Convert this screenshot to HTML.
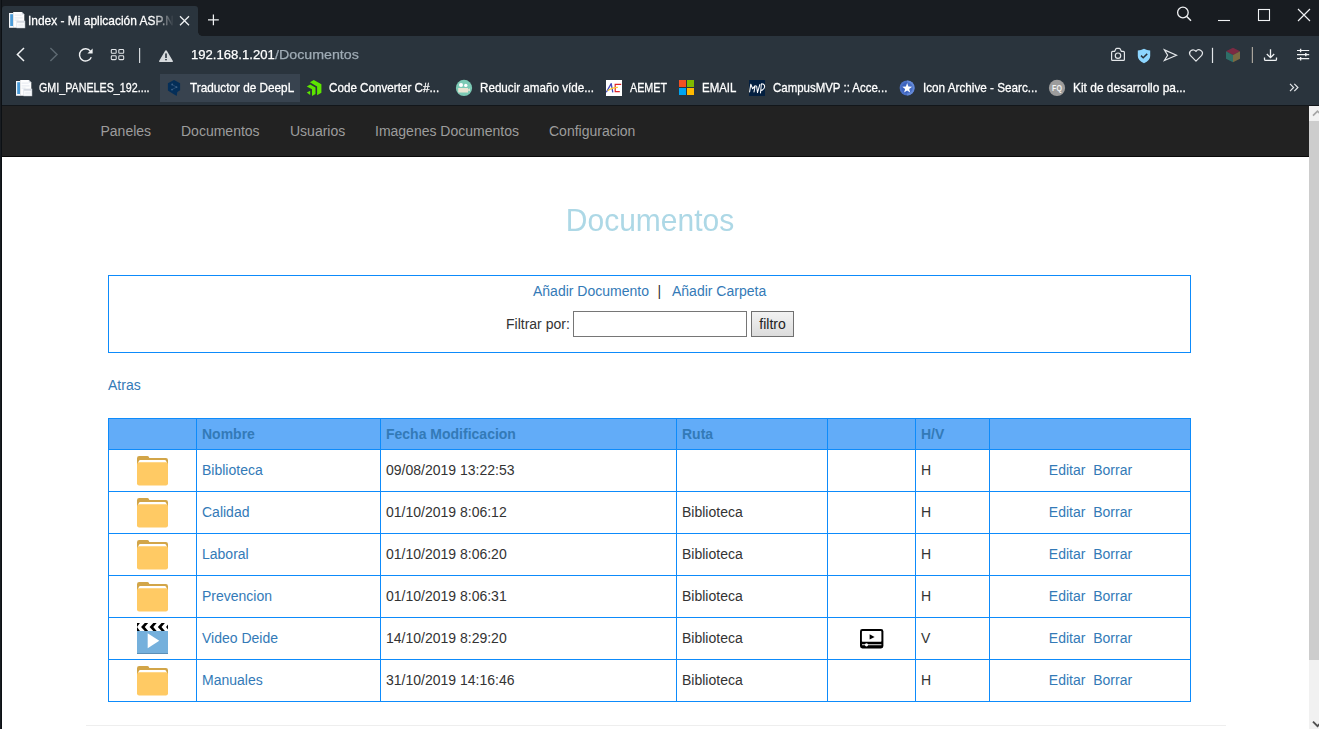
<!DOCTYPE html>
<html lang="es">
<head>
<meta charset="utf-8">
<title>Index - Mi aplicación ASP.NET</title>
<style>
*{box-sizing:border-box;margin:0;padding:0}
html,body{width:1319px;height:729px;overflow:hidden;background:#fff}
body{position:relative;font-family:"Liberation Sans",sans-serif;font-size:14px;line-height:20px;color:#333}
.abs{position:absolute}
svg{position:absolute;overflow:hidden}
/* ---------- browser chrome ---------- */
#titlebar{position:absolute;left:0;top:0;width:1319px;height:36px;background:#181c21}
#tab{position:absolute;left:2px;top:6px;width:196px;height:30px;background:#2a343d;border-radius:3px 3px 0 0}
#tabcurve{position:absolute;left:198px;top:32px;width:4px;height:4px;background:radial-gradient(circle at 100% 0,#181c21 3.5px,#2a343d 4px)}
#tabtitle{-webkit-text-stroke:0.3px #fff;position:absolute;left:27.7px;top:11px;width:146px;height:20px;line-height:20px;font-size:13.2px;color:#fff;white-space:nowrap;overflow:hidden;
  -webkit-mask-image:linear-gradient(90deg,#000 125px,transparent 146px);mask-image:linear-gradient(90deg,#000 125px,transparent 146px)}
#toolbar{position:absolute;left:0;top:36px;width:1319px;height:69px;background:#2a343d}
#chromeline{position:absolute;left:0;top:105px;width:1319px;height:1px;background:#12161a}
#leftedge{position:absolute;left:0;top:0;width:2px;height:729px;background:linear-gradient(90deg,#181c21 1px,#0c1014 1px)}
.url{-webkit-text-stroke:0.25px currentColor;position:absolute;left:190.7px;top:45px;height:20px;line-height:20px;font-size:13.7px;color:#fff;white-space:nowrap}

.bm{-webkit-text-stroke:0.3px #fff;position:absolute;top:78px;height:20px;line-height:20px;font-size:13.2px;transform-origin:0 50%;color:#fff;white-space:nowrap}
#bmhl{position:absolute;left:160px;top:74px;width:140px;height:28px;background:#38434f}
/* ---------- page ---------- */
#navbar{position:absolute;left:2px;top:106px;width:1307px;height:51px;background:#222;border-bottom:1px solid #080808}
.nl{position:absolute;top:121px;height:20px;line-height:20px;font-size:14px;color:#9d9d9d;white-space:nowrap}
#sbar{position:absolute;left:1309px;top:106px;width:10px;height:623px;background:#f1f1f1}
#sthumb{position:absolute;left:1309px;top:121px;width:10px;height:539px;background:#cdcdcd}
h2{transform:scaleY(1.06);transform-origin:50% 50%;position:absolute;left:2px;top:203px;width:1296px;text-align:center;font-size:30px;line-height:33px;font-weight:normal;color:#add8e6}
#box{position:absolute;left:108px;top:275px;width:1083px;height:78px;border:1px solid #0d8bfb}
a,.lnk{color:#337ab7;text-decoration:none}
.t{position:absolute;white-space:nowrap;height:20px;line-height:20px}
#finput{position:absolute;left:573px;top:311px;width:174px;height:26px;border:1px solid #767676;background:#fff}
#fbtn{position:absolute;left:751px;top:311px;width:43px;height:26px;border:1px solid #707070;background:linear-gradient(#f2f2f2,#dcdcdc);text-align:center;line-height:24px;font-size:14px;color:#222}
#hr{position:absolute;left:86px;top:725px;width:1140px;height:1px;background:#eee}
/* table */
#tbl{position:absolute;left:108px;top:418px;border-collapse:collapse;table-layout:fixed;width:1082px}
#tbl th,#tbl td{border:1px solid #0d8bfb;padding:0 5px;text-align:left;vertical-align:middle;white-space:nowrap;font-size:14px;line-height:20px}
#tbl th{height:31px;background:#62acf8;color:#337ab7;font-weight:bold}
#tbl td{height:42px;color:#333;padding-bottom:2px}
#tbl td.ic{padding:0;position:relative;vertical-align:top}
#tbl td.act{text-align:center;padding-left:6px;padding-right:5px}
</style>
</head>
<body>
<!-- ======= browser chrome ======= -->
<div id="titlebar"></div>
<div id="tab"></div>
<div id="tabcurve"></div>
<div id="toolbar"></div>
<div id="chromeline"></div>
<div id="tabtitle"><span style="display:inline-block;transform-origin:0 50%;transform:scaleX(0.906)">Index - Mi aplicación ASP.NET</span></div>
<div class="url" style="left:191.3px;transform-origin:0 50%;transform:scaleX(0.957)">192.168.1.201</div><div class="url" style="left:275px;color:#9fabb5;transform-origin:0 50%;transform:scaleX(1.039)">/Documentos</div>
<div id="bmhl"></div>
<div class="bm" style="left:39.4px;transform:scaleX(0.8127)">GMI_PANELES_192....</div>
<div class="bm" style="left:190.3px;transform:scaleX(0.8920)">Traductor de DeepL</div>
<div class="bm" style="left:329.4px;transform:scaleX(0.8844)">Code Converter C#...</div>
<div class="bm" style="left:479.6px;transform:scaleX(0.8828)">Reducir amaño víde...</div>
<div class="bm" style="left:630.4px;transform:scaleX(0.8143)">AEMET</div>
<div class="bm" style="left:702.1px;transform:scaleX(0.8691)">EMAIL</div>
<div class="bm" style="left:772.5px;transform:scaleX(0.8687)">CampusMVP :: Acce...</div>
<div class="bm" style="left:922.5px;transform:scaleX(0.8876)">Icon Archive - Searc...</div>
<div class="bm" style="left:1072.5px;transform:scaleX(0.9060)">Kit de desarrollo pa...</div>
<!--ICONS_START--><svg id="chromeicons" style="left:0;top:0" width="1319" height="106" viewBox="0 0 1319 106" fill="none">
<g transform="translate(9,12)">
<rect x="0" y="1" width="4.4" height="14.8" fill="#f4f6f9"/>
<rect x="1.2" y="2.2" width="2.8" height="11.8" fill="#4a9bd8"/>
<path d="M4.2 0H12.8L15.3 2.6V15.8H4.2Z" fill="#fdfdfe"/>
<path d="M12.8 0L15.3 2.6H12.8Z" fill="#cfd6df"/>
<rect x="5.6" y="2.6" width="7" height="1" fill="#e4e8ee"/><rect x="5.6" y="5.4" width="8" height="1" fill="#e4e8ee"/><rect x="5.6" y="7.6" width="4" height="1" fill="#e4e8ee"/>
<rect x="7.8" y="9" width="8.1" height="6.9" fill="#fbfcfd" stroke="#d5dae2" stroke-width="0.6"/>
<rect x="8.1" y="9.3" width="7.5" height="1.3" fill="#c9cfd9"/>
<rect x="9.2" y="11.8" width="5.3" height="2.6" fill="#eef1f5"/>
</g>
<path d="M180 16.2L189 25.2M189 16.2L180 25.2" stroke="#f0f2f4" stroke-width="1.25"/>
<path d="M208 19.8H218.8M213.4 14.4V25.2" stroke="#f0f2f4" stroke-width="1.25"/>
<circle cx="1182.9" cy="12.5" r="5.3" stroke="#f0f2f4" stroke-width="1.3"/><path d="M1186.8 16.5L1191 20.7" stroke="#f0f2f4" stroke-width="1.5"/>
<path d="M1218 20.5H1230" stroke="#f0f2f4" stroke-width="1.1"/>
<rect x="1258.5" y="9.5" width="11" height="11" stroke="#f0f2f4" stroke-width="1.1"/>
<path d="M1298 9L1310 21M1310 9L1298 21" stroke="#f0f2f4" stroke-width="1.15"/>
<path d="M24 48L17.4 54.5L24 61" stroke="#f0f2f4" stroke-width="1.5"/>
<path d="M50.4 48L57 54.5L50.4 61" stroke="#5d6871" stroke-width="1.5"/>
<path d="M91.26 57.19A6.1 6.1 0 1 1 90.41 51.14" stroke="#f0f2f4" stroke-width="1.4"/>
<path d="M92.6 48.4V53.6H87.4Z" fill="#f0f2f4"/>
<rect x="111.3" y="49.5" width="4.9" height="3.8" rx="0.9" stroke="#e3e6e9" stroke-width="1.05"/>
<rect x="111.3" y="55.8" width="4.9" height="3.8" rx="0.9" stroke="#e3e6e9" stroke-width="1.05"/>
<rect x="118.8" y="49.5" width="4.9" height="3.8" rx="0.9" stroke="#e3e6e9" stroke-width="1.05"/>
<rect x="118.8" y="55.8" width="4.9" height="3.8" rx="0.9" stroke="#e3e6e9" stroke-width="1.05"/>
<rect x="139" y="48" width="1.2" height="15" fill="#d3d7db"/>
<path d="M166 50.2Q166.6 50.2 167 50.9L172.9 60.9Q173.3 62 172.2 62H159.8Q158.7 62 159.1 60.9L165 50.9Q165.4 50.2 166 50.2Z" fill="#d6dadd"/><rect x="165.2" y="53.4" width="1.6" height="4.6" fill="#2a343d"/><rect x="165.2" y="59" width="1.6" height="1.3" fill="#2a343d"/>
<path d="M1112.6 51.4H1114.6L1115.8 49Q1116.1 48.4 1116.8 48.4H1119.2Q1119.9 48.4 1120.2 49L1121.4 51.4H1123.4Q1124.4 51.4 1124.4 52.4V59.4Q1124.4 60.4 1123.4 60.4H1112.6Q1111.6 60.4 1111.6 59.4V52.4Q1111.6 51.4 1112.6 51.4Z" stroke="#e3e6e9" stroke-width="1.2" stroke-linejoin="round"/><circle cx="1118" cy="55.7" r="2.7" stroke="#e3e6e9" stroke-width="1.2"/>
<path d="M1144 48.7Q1147 50.2 1150.2 50.5V56Q1150.2 60.6 1144 63.2Q1137.8 60.6 1137.8 56V50.5Q1141 50.2 1144 48.7Z" fill="#8dd6ff"/><path d="M1141 55.6L1143.2 57.7L1147.2 53.9" stroke="#2a343d" stroke-width="1.5"/>
<path d="M1164.4 49.9L1176.5 55.2L1164.4 60.5L1167.6 55.2Z" stroke="#e3e6e9" stroke-width="1.2" stroke-linejoin="miter"/>
<path d="M1196 61.2L1190.3 55.4A3.4 3.4 0 0 1 1196 51.4A3.4 3.4 0 0 1 1201.7 55.4Z" stroke="#e3e6e9" stroke-width="1.2" stroke-linejoin="round"/>
<rect x="1211.9" y="47.8" width="1.2" height="15.2" fill="#e3e6e9"/>
<path d="M1233 47.8L1240 51.3L1233 55L1226 51.3Z" fill="#7b2a43"/><path d="M1226 51.3L1233 55V62.2L1226 58.7Z" fill="#2f6e68"/><path d="M1240 51.3L1233 55V62.2L1240 58.7Z" fill="#7a6a42"/>
<rect x="1251.8" y="47" width="1.2" height="16" fill="#a9a49c"/>
<path d="M1270.5 49.2V57.4M1266.8 54L1270.5 57.6L1274.2 54" stroke="#f0f2f4" stroke-width="1.3"/><path d="M1264.5 57.6V59.2Q1264.5 60.4 1265.7 60.4H1275.3Q1276.5 60.4 1276.5 59.2V57.6" stroke="#f0f2f4" stroke-width="1.3"/>
<path d="M1297 50.5H1309.2M1297 54.6H1309.2M1297 58.7H1309.2" stroke="#f0f2f4" stroke-width="1.2"/><path d="M1300.6 48.8V52.2M1305.8 52.9V56.3M1300.6 57V60.4" stroke="#f0f2f4" stroke-width="1.4"/>
<g transform="translate(16,80)">
<rect x="0" y="1" width="4.4" height="14.8" fill="#f4f6f9"/>
<rect x="1.2" y="2.2" width="2.8" height="11.8" fill="#4a9bd8"/>
<path d="M4.2 0H12.8L15.3 2.6V15.8H4.2Z" fill="#fdfdfe"/>
<path d="M12.8 0L15.3 2.6H12.8Z" fill="#cfd6df"/>
<rect x="5.6" y="2.6" width="7" height="1" fill="#e4e8ee"/><rect x="5.6" y="5.4" width="8" height="1" fill="#e4e8ee"/><rect x="5.6" y="7.6" width="4" height="1" fill="#e4e8ee"/>
<rect x="7.8" y="9" width="8.1" height="6.9" fill="#fbfcfd" stroke="#d5dae2" stroke-width="0.6"/>
<rect x="8.1" y="9.3" width="7.5" height="1.3" fill="#c9cfd9"/>
<rect x="9.2" y="11.8" width="5.3" height="2.6" fill="#eef1f5"/>
</g>
<path d="M174 80L180.1 83.3V90.3L177.3 91.9L176.7 95.9L170.6 92.3L167.9 90.6V83.3Z" fill="#042e58"/><path d="M172.2 84.5L176.5 87.2L172 89.6" stroke="#35587c" stroke-width="0.7"/><circle cx="172.2" cy="84.5" r="0.9" fill="#3f6288"/><circle cx="176.5" cy="87.2" r="0.9" fill="#3f6288"/><circle cx="172" cy="89.6" r="0.9" fill="#3f6288"/>
<path d="M309.9 82.3L313.8 80L321.4 84.2V92.8L317.1 95.3V86.5Z M306.75 86.4L310.2 84.6L315.5 87.5V94.1L312 96.1V89.3Z M306.75 92.5L310.2 90.8V95.1Z" fill="#5ce500"/>
<circle cx="464" cy="87.9" r="8.1" fill="#7ccab5"/><circle cx="461" cy="84.9" r="2" fill="#fff"/><circle cx="465.8" cy="85.4" r="1.7" fill="#fff"/><path d="M458.2 88H468.1V89.4L469.9 88.3V91.2L468.1 90.6V92.5H458.2Z" fill="#e9e4d2"/>
<rect x="606" y="80" width="16" height="16" fill="#fff"/><path d="M606.3 92.2L611.2 83.6L612.8 92.4" stroke="#4648bb" stroke-width="1.3" stroke-linejoin="round"/><path d="M621.2 84.4H615.2V91.7H619.8" stroke="#e0242a" stroke-width="1.2"/><path d="M607.6 90.8Q611.5 87.8 617.9 87.4" stroke="#ffc72c" stroke-width="1.1"/>
<rect x="679" y="80" width="7" height="7" fill="#f25022"/><rect x="687" y="80" width="7" height="7" fill="#7fba00"/><rect x="679" y="88" width="7" height="7" fill="#00a4ef"/><rect x="687" y="88" width="7" height="7" fill="#ffb900"/>
<rect x="749" y="80" width="16" height="16" fill="#031f40"/><path d="M749.6 92L750.8 84.2L752.6 88.8L755.2 85.6L754 92M756.6 86L757.5 92.6L759.8 84.6M760.5 93L761.4 83.8Q764.9 84 764.6 87Q764.2 89.8 761 90.4" stroke="#fff" stroke-width="1.05" stroke-linejoin="round" stroke-linecap="round"/>
<circle cx="907.1" cy="87.9" r="7.5" fill="#4b70c6"/><path d="M907.1 80.4A7.5 7.5 0 0 1 907.1 95.4Z" fill="#6388d6"/><circle cx="907.1" cy="87.9" r="5.6" fill="#3058b8" opacity="0.55"/><polygon points="907.15,83.10 908.38,86.60 912.10,86.69 909.15,88.95 910.21,92.51 907.15,90.40 904.09,92.51 905.15,88.95 902.20,86.69 905.92,86.60" fill="#fff"/>
<circle cx="1057" cy="87.9" r="8.1" fill="#9c9c9c"/><text x="1057" y="91" text-anchor="middle" font-family="Liberation Sans, sans-serif" font-weight="bold" font-size="8.4" fill="#fff" fill-opacity="0.88" textLength="9.8" lengthAdjust="spacingAndGlyphs">FQ</text>
<path d="M1290 83.9L1293.6 87.5L1290 91.1M1294.3 83.9L1297.9 87.5L1294.3 91.1" stroke="#e3e6e9" stroke-width="1.2"/>
</svg><!--ICONS_END-->

<!-- ======= page ======= -->
<div id="navbar"></div>
<div class="nl" style="left:100.5px">Paneles</div>
<div class="nl" style="left:181px">Documentos</div>
<div class="nl" style="left:290px">Usuarios</div>
<div class="nl" style="left:375px">Imagenes Documentos</div>
<div class="nl" style="left:549px">Configuracion</div>
<div id="sbar"></div>
<div id="sthumb"></div>
<svg style="left:1309px;top:106px" width="10" height="623" viewBox="1309 106 10 623" fill="none"><path d="M1313 115.6L1317.5 111.1L1322 115.6" stroke="#a5a5a5" stroke-width="1.7"/><path d="M1313 721.6L1317.5 726.1L1322 721.6" stroke="#505050" stroke-width="1.9"/></svg>
<h2>Documentos</h2>
<div id="box"></div>
<div class="t lnk" style="left:533px;top:281px">Añadir Documento</div>
<div class="t" style="left:657.6px;top:281px">|</div>
<div class="t lnk" style="left:672px;top:281px">Añadir Carpeta</div>
<div class="t" style="left:506px;top:314px">Filtrar por:</div>
<div id="finput"></div>
<div id="fbtn">filtro</div>
<div class="t lnk" style="left:108px;top:375px">Atras</div>
<table id="tbl"><colgroup><col style="width:88px"><col style="width:184px"><col style="width:296px"><col style="width:151px"><col style="width:88px"><col style="width:74px"><col style="width:201px"></colgroup>
<tr><th></th><th>Nombre</th><th>Fecha Modificacion</th><th>Ruta</th><th></th><th>H/V</th><th></th></tr>
<tr><td class="ic"><svg style="left:28px;top:6px" width="31" height="30" viewBox="0 0 32 30" preserveAspectRatio="none"><path d="M0 2.2Q0 0 2.2 0H10.5Q12 0 12.4 1.3L12.7 2H29.8Q32 2 32 4.2V10H0Z" fill="#d2a548"/><path d="M2.2 4.6Q2.6 4 3.4 4H28.6Q29.4 4 29.8 4.6L31 7H1Z" fill="#fff"/><path d="M0 8.4Q0 6.2 2.2 6.2H29.8Q32 6.2 32 8.4V27.2Q32 29.4 29.8 29.4H2.2Q0 29.4 0 27.2Z" fill="#ffca64"/></svg></td><td><span class="lnk">Biblioteca</span></td><td>09/08/2019 13:22:53</td><td></td><td class="ic"></td><td>H</td><td class="act"><span class="lnk">Editar</span>&nbsp; <span class="lnk">Borrar</span></td></tr>
<tr><td class="ic"><svg style="left:28px;top:6px" width="31" height="30" viewBox="0 0 32 30" preserveAspectRatio="none"><path d="M0 2.2Q0 0 2.2 0H10.5Q12 0 12.4 1.3L12.7 2H29.8Q32 2 32 4.2V10H0Z" fill="#d2a548"/><path d="M2.2 4.6Q2.6 4 3.4 4H28.6Q29.4 4 29.8 4.6L31 7H1Z" fill="#fff"/><path d="M0 8.4Q0 6.2 2.2 6.2H29.8Q32 6.2 32 8.4V27.2Q32 29.4 29.8 29.4H2.2Q0 29.4 0 27.2Z" fill="#ffca64"/></svg></td><td><span class="lnk">Calidad</span></td><td>01/10/2019 8:06:12</td><td>Biblioteca</td><td class="ic"></td><td>H</td><td class="act"><span class="lnk">Editar</span>&nbsp; <span class="lnk">Borrar</span></td></tr>
<tr><td class="ic"><svg style="left:28px;top:6px" width="31" height="30" viewBox="0 0 32 30" preserveAspectRatio="none"><path d="M0 2.2Q0 0 2.2 0H10.5Q12 0 12.4 1.3L12.7 2H29.8Q32 2 32 4.2V10H0Z" fill="#d2a548"/><path d="M2.2 4.6Q2.6 4 3.4 4H28.6Q29.4 4 29.8 4.6L31 7H1Z" fill="#fff"/><path d="M0 8.4Q0 6.2 2.2 6.2H29.8Q32 6.2 32 8.4V27.2Q32 29.4 29.8 29.4H2.2Q0 29.4 0 27.2Z" fill="#ffca64"/></svg></td><td><span class="lnk">Laboral</span></td><td>01/10/2019 8:06:20</td><td>Biblioteca</td><td class="ic"></td><td>H</td><td class="act"><span class="lnk">Editar</span>&nbsp; <span class="lnk">Borrar</span></td></tr>
<tr><td class="ic"><svg style="left:28px;top:6px" width="31" height="30" viewBox="0 0 32 30" preserveAspectRatio="none"><path d="M0 2.2Q0 0 2.2 0H10.5Q12 0 12.4 1.3L12.7 2H29.8Q32 2 32 4.2V10H0Z" fill="#d2a548"/><path d="M2.2 4.6Q2.6 4 3.4 4H28.6Q29.4 4 29.8 4.6L31 7H1Z" fill="#fff"/><path d="M0 8.4Q0 6.2 2.2 6.2H29.8Q32 6.2 32 8.4V27.2Q32 29.4 29.8 29.4H2.2Q0 29.4 0 27.2Z" fill="#ffca64"/></svg></td><td><span class="lnk">Prevencion</span></td><td>01/10/2019 8:06:31</td><td>Biblioteca</td><td class="ic"></td><td>H</td><td class="act"><span class="lnk">Editar</span>&nbsp; <span class="lnk">Borrar</span></td></tr>
<tr><td class="ic"><svg style="left:28px;top:5px" width="31" height="31" viewBox="0 0 32 31" preserveAspectRatio="none"><rect x="0" y="0" width="32" height="8" fill="#fff"/><path d="M-1 0H3L0 4L3 8H-1L0 8V0Z M8 0H11.5L8 4L11.5 8H8L4.2 4Z M16.8 0H20.3L16.8 4L20.3 8H16.8L13 4Z M25.3 0H28.8L25.3 4L28.8 8H25.3L21.5 4Z M32 1.5V6.5L30 4Z" fill="#000"/><rect x="0" y="8" width="32" height="23" fill="#75b0dc"/><rect x="0" y="30" width="32" height="1" fill="#5c8fb6"/><path d="M11 10.3L23 17.8L11 25.3Z" fill="#fff"/></svg></td><td><span class="lnk">Video Deide</span></td><td>14/10/2019 8:29:20</td><td>Biblioteca</td><td class="ic"><svg style="left:32px;top:11px" width="24" height="20" viewBox="0 0 24 20"><rect x="0" y="0" width="23.4" height="19.4" rx="2.4" fill="#000"/><rect x="1.9" y="2.1" width="19.5" height="10.6" rx="0.6" fill="#fff"/><path d="M9.6 5.2L14.6 7.9L9.6 10.6Z" fill="#000"/><rect x="2" y="15.3" width="19.4" height="0.9" fill="#fff"/><circle cx="6.5" cy="15.8" r="1.6" fill="#fff"/></svg></td><td>V</td><td class="act"><span class="lnk">Editar</span>&nbsp; <span class="lnk">Borrar</span></td></tr>
<tr><td class="ic"><svg style="left:28px;top:6px" width="31" height="30" viewBox="0 0 32 30" preserveAspectRatio="none"><path d="M0 2.2Q0 0 2.2 0H10.5Q12 0 12.4 1.3L12.7 2H29.8Q32 2 32 4.2V10H0Z" fill="#d2a548"/><path d="M2.2 4.6Q2.6 4 3.4 4H28.6Q29.4 4 29.8 4.6L31 7H1Z" fill="#fff"/><path d="M0 8.4Q0 6.2 2.2 6.2H29.8Q32 6.2 32 8.4V27.2Q32 29.4 29.8 29.4H2.2Q0 29.4 0 27.2Z" fill="#ffca64"/></svg></td><td><span class="lnk">Manuales</span></td><td>31/10/2019 14:16:46</td><td>Biblioteca</td><td class="ic"></td><td>H</td><td class="act"><span class="lnk">Editar</span>&nbsp; <span class="lnk">Borrar</span></td></tr>
</table>
<div id="hr"></div>
<div id="leftedge"></div>
</body>
</html>
